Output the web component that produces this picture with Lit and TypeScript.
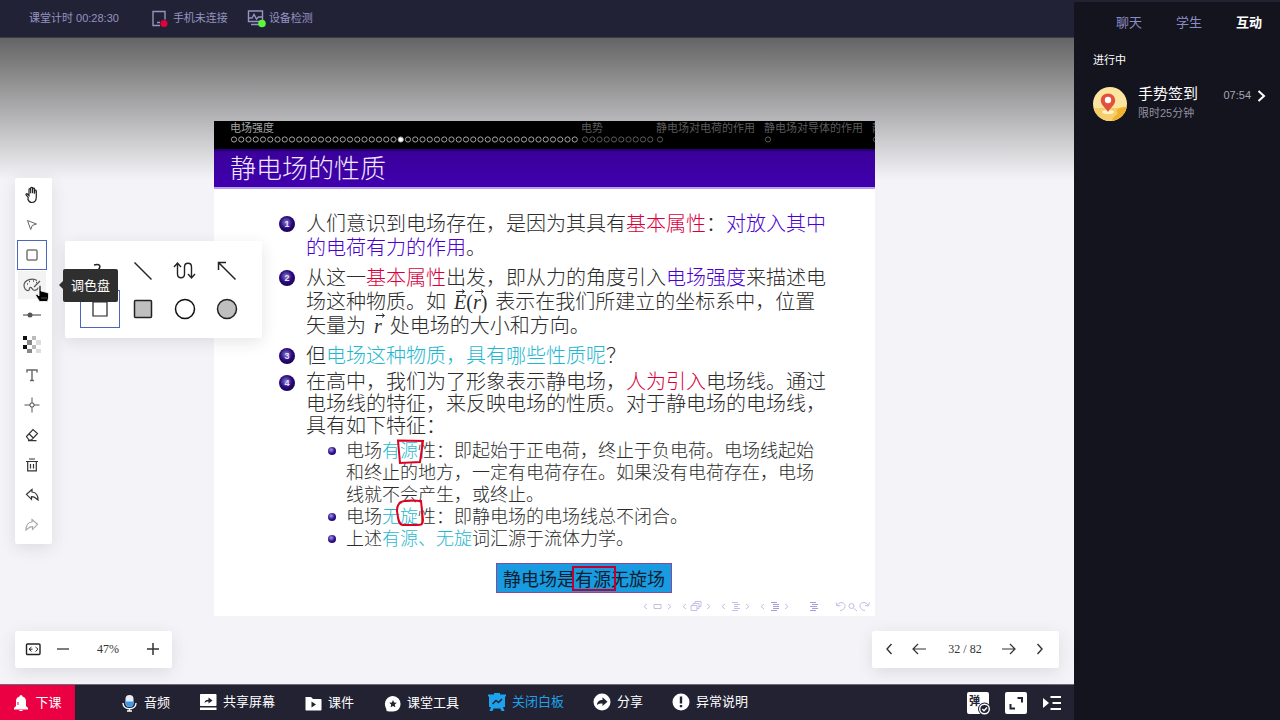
import { LitElement, html, css, svg, nothing } from "lit";
import { customElement, state } from "lit/decorators.js";

const box = (size: number, body: unknown) => html`<svg width=${size} height=${size} viewBox="0 0 ${size} ${size}" fill="none" stroke="currentColor" aria-hidden="true">${body}</svg>`;

const tools = [
  { name: "移动", icon: box(20, svg`<path d="M5.8 12.2 3.7 9.8c-.6-.9.5-1.7 1.3-1l1.6 1.5V4.4c0-1.2 1.6-1.2 1.7 0V8 3.1c.1-1.2 1.8-1.2 1.9 0V8l.1-4.3c.1-1.1 1.7-1.1 1.8 0v4.8l.2-3c.2-1 1.6-.9 1.6.2v5.8c0 3.5-1.6 5.8-4.5 5.8-2.300 0-3.300-1.500-3.900-3.200z" transform="translate(.4 .2)" stroke="#222" stroke-width="1.200"/>`) },
  { name: "选择", icon: box(20, svg`<path d="M5.500 5.500 14.500 9 10.300 10.400 8.700 14.500z" stroke="#666"/>`) },
  { name: "矩形", icon: box(20, svg`<rect x="5" y="5" width="10" height="10" rx=".5"/>`) },
  { name: "调色盘", icon: box(20, svg`<path d="M15 5.500C11 2.500 2.500 4.500 2 10c-.2 3 2 6 4.500 5.500 1.500-.5 0-2 1.500-3 1.500-.8 2 1.500 3.500 2.500 2 1 4-.5 5-2.500M18 6l-6 6" stroke="#555" stroke-width="1.200"/><path d="M5 9h1M7 6.500h1M11 6h1M14 7.500h1" stroke="#555" stroke-width="1.500"/>`) },
  { name: "线宽", icon: box(20, svg`<path d="M1 10h18" stroke="#666" stroke-width="1.300"/><circle cx="8" cy="10" r="2.500" fill="#555" stroke="none"/>`) },
  { name: "透明度", icon: box(20, svg`<g stroke="none"><path fill="#111" d="M1 1h4v4H1zM1 10h4v4H1z"/><path fill="#888" d="M5 5h5v5H5zM5 14h5v4H5z"/><path fill="#bbb" d="M10 1h4v4h-4zM10 10h4v4h-4z"/><path fill="#ddd" d="M14 5h5v5h-5zM14 14h5v4h-5z"/></g>`) },
  { name: "文本", icon: box(20, svg`<path d="M5 7.500V5h10v2.500M10 5v10.500M8 15.500h4" stroke="#666" stroke-width="1.400"/>`) },
  { name: "激光笔", icon: box(20, svg`<circle cx="10" cy="10" r="2.200"/><path d="M10 2.500v5M10 12.500v5M2.500 10h5M12.500 10h5" stroke="#555"/>`) },
  { name: "橡皮", icon: box(20, svg`<path d="m4.500 11.500 6.500-7 4.500 4-6 6.500H7zM7 8.800l4.300 4.200M6 15.700h8.500" stroke-width="1.200"/>`) },
  { name: "清空", icon: box(20, svg`<path d="M4 6.500h12M7 4h6M5.700 6.500v9.300h8.600V6.500M8.500 9v4.500M11.500 9v4.500" stroke-width="1.200"/>`) },
  { name: "撤销", icon: box(20, svg`<path d="M10 4.500 4.500 9.300l5 5v-2.600c3-.2 4 1.300 6.500 3.300 0-4.500-2-7.700-6-8z" stroke-width="1.200"/>`) },
  { name: "重做", icon: box(20, svg`<path d="M10 4.500 15.500 9.300l-5 5v-2.600c-3-.2-4 1.300-6.500 3.300 0-4.500 2-7.700 6-8z" stroke="#aaa" stroke-width="1.200"/>`) },
];

const shapes = [
  { name: "曲线", icon: box(26, svg`<path d="M6 7c8-2 7 3 2 7s3 6 11 5" stroke="#222" stroke-width="1.500"/>`) },
  { name: "直线", icon: box(26, svg`<path d="m4.500 4.500 17 17" stroke="#222" stroke-width="1.500"/>`) },
  { name: "折返线", icon: box(26, svg`<path d="m2 9 3.500-4L9 9M5.500 5v11c0 5 7 5 7 0V9c0-5 7-5 7 0v10M16 16l3.500 4 3.500-4" stroke="#222" stroke-width="1.400"/>`) },
  { name: "箭头", icon: box(26, svg`<path d="m21.500 21.500-17-17M4.500 12V4.500H12" stroke="#222" stroke-width="1.500"/>`) },
  { name: "矩形", icon: box(26, svg`<path d="M6 6h14v14H6z" stroke="#222" stroke-width="1.200"/>`) },
  { name: "实心矩形", icon: box(26, svg`<rect x="4.500" y="4.500" width="17" height="17" rx="1" fill="#bfbfbf" stroke="#222" stroke-width="1.500"/>`) },
  { name: "圆形", icon: box(26, svg`<circle cx="13" cy="13" r="9.500" stroke="#111" stroke-width="1.500"/>`) },
  { name: "实心圆形", icon: box(26, svg`<circle cx="13" cy="13" r="9.500" fill="#bfbfbf" stroke="#222" stroke-width="1.500"/>`) },
];

const actions = [
  { name: "音频", low: true, icon: box(18, svg`<rect x="5.500" y="1" width="8" height="12" rx="4" fill="#e8ecfa" stroke="none"/><path d="M5.500 7.500h8V9a4 4 0 0 1-8 0z" fill="#3b9be8" stroke="none"/><path d="M3 9c0 3.800 3 5.800 6.500 5.800S16 12.800 16 9M9.500 15v2M7 17h5" stroke-width="1.400"/>`) },
  { name: "共享屏幕", icon: box(18, svg`<path fill="currentColor" stroke="none" d="M2 1h14.500v0c.6 0 1 .4 1 1v10c0 .6-.4 1-1 1H2c-.6 0-1-.4-1-1V2c0-.6.4-1 1-1zM1 14.500h16.500V17H1z"/><path d="M5.500 10c.3-2 1.500-3.200 4-3.200V4.500L13.500 7.500 9.500 10.500V8.500c-1.500 0-2.500.3-4 1.500z" fill="#222233" stroke="none"/>`) },
  { name: "课件", low: true, icon: box(18, svg`<path fill="currentColor" stroke="none" d="M2 3h5l2 2h7.500c.6 0 1 .4 1 1v9.500c0 .6-.4 1-1 1H2.500c-.6 0-1-.4-1-1V3z"/><path d="m7.500 7.500 4.500 3-4.500 3z" fill="#222233" stroke="none"/>`) },
  { name: "课堂工具", low: true, icon: box(18, svg`<path fill="currentColor" stroke="none" d="M10 2a7.700 7.700 0 0 1 7.500 8c0 4.500-3 7.500-7.500 7.500-2 0-5.500 0-6.500-.5.300-1-.5-2.500-1-4A8 8 0 0 1 10 2z"/><path d="m10 6 1.100 2.500 2.700.3-2 1.800.6 2.700L10 11.900l-2.400 1.400.6-2.700-2-1.800 2.700-.3z" fill="#222233" stroke="none"/>`) },
  { name: "关闭白板", on: true, icon: box(18, svg`<path fill="currentColor" stroke="none" d="M6 0h6v1.500h6v2h-1V14h-2l1.500 4h-3L12.300 15.500H5.700L4.500 18h-3L3 14H1V3.500H0v-2h6z"/><path d="m4.500 11 3.500-3.500 2.500 2L14 6" stroke="#222233" stroke-width="1.500"/>`) },
  { name: "分享", icon: box(18, svg`<circle cx="9" cy="9" r="8.500" fill="currentColor" stroke="none"/><path d="M4 12c.3-3.500 2-5 5.500-5V4.200L14.500 8.700l-5 4.300v-2.600c-2.500 0-4 .3-5.500 1.600z" fill="#222233" stroke="none"/>`) },
  { name: "异常说明", icon: box(18, svg`<circle cx="9" cy="9" r="8.500" fill="currentColor" stroke="none"/><path d="M9 3.500v7M9 12v2.300" stroke="#222233" stroke-width="2.400"/>`) },
];

const sections = [
  { name: "电场强度", pages: 48, current: 23 },
  { name: "电势", pages: 10 },
  { name: "静电场对电荷的作用", pages: 1 },
  { name: "静电场对导体的作用", pages: 1 },
  { name: "静", pages: 1 },
];

const vec = (letter: string) => html`<i class="vec">${letter}<svg width="10" height="5" viewBox="0 0 10 5" fill="none" stroke="currentColor"><path d="M0 2.500h8M6 .5l2.500 2L6 4.500"/></svg></i>`;

@customElement("lecture-slide")
class LectureSlide extends LitElement {
  static styles = css`
    :host { display: block; background: #fff; color: #2c2c2c; font: 300 20px/24px "Noto Sans CJK SC", sans-serif; white-space: nowrap; }
    .outline { display: grid; grid-template-columns: 351px 75px 108px 108px minmax(0, 1fr); padding-left: 16px; height: 28px; background: #000; color: #5c5c5c; font-size: 11px; font-weight: 400; line-height: 13px; overflow-x: clip; }
    .outline .here { color: #a4a4a4; }
    .dots { display: block; overflow: visible; }
    h1 { margin: 0; padding: 0 16px 2px; background: linear-gradient(#1c0060, #3a009a 3px, #4000ae); border-bottom: 2px solid #b9a0ee; color: #efe8ff; font-size: 26px; font-weight: 300; line-height: 36px; }
    ol, ul { list-style: none; margin: 0; padding: 0; }
    ol { padding: 22px 40px 0 65px; }
    ol > li { display: grid; grid-template-columns: 16px 1fr; column-gap: 11px; margin-bottom: 6px; }
    ol > li.tight { margin-bottom: 3px; }
    ol > li.dense { line-height: 22px; margin-bottom: 15px; }
    .ball { width: 16px; height: 16px; margin-top: 5px; border-radius: 50%; background: radial-gradient(circle at 45% 40%, #8a80c8, #2a0a80 45%, #12003c 85%); color: #e6e2fa; font: bold 9px/16px "Liberation Sans", sans-serif; text-align: center; }
    ul { margin: 2px 0 0 22px; font-size: 18px; line-height: 22px; }
    ul li { display: grid; grid-template-columns: 8px 1fr; column-gap: 10px; }
    .bead { width: 8px; height: 8px; margin-top: 9px; border-radius: 50%; background: radial-gradient(circle at 40% 35%, #a09ad8, #2e1090 50%, #1a0050); }
    .red { color: #d8003c; }
    .blue { color: #4a00d0; }
    .cyan { color: #1fb8d0; }
    .math { font: 20px/20px "Liberation Serif", serif; margin: 0 8px; }
    .vec { position: relative; }
    .vec svg { position: absolute; left: 2px; top: -2px; }
    .ring { position: relative; }
    .ring svg { position: absolute; left: -4px; top: 2px; fill: none; stroke: #e00022; stroke-width: 2; }
    .final { display: block; width: max-content; margin: 0 0 0 282px; padding: 0 6px; border: 1px solid #8a4a9c; background: #189be0; color: #102030; font-size: 18px; font-weight: 400; line-height: 28px; }
    .final .ring::after { content: ""; position: absolute; inset: 1px -5px 0 -3px; border: 2px solid #c40030; }
    .nav { display: block; margin: 4px 2px 0 auto; }
  `;
  render() {
    return html`
      <div class="outline">
        ${sections.map((s) => html`<div class=${s.current ? "here" : ""}>${s.name}
          <svg class="dots" width=${s.pages * 7.25} height="12" viewBox="0 0 ${s.pages * 7.25} 12" fill="none" stroke="currentColor">
            ${Array.from({ length: s.pages }, (_, i) => svg`<circle cx=${4 + i * 7.25} cy="5.500" r="2.600" fill=${i === s.current ? "#fff" : "none"}/>`)}
          </svg></div>`)}
      </div>
      <h1>静电场的性质</h1>
      <ol>
        <li><span class="ball">1</span><div>人们意识到电场存在，是因为其具有<span class="red">基本属性</span>：<span class="blue">对放入其中<br>的电荷有力的作用</span>。</div></li>
        <li><span class="ball">2</span><div>从这一<span class="red">基本属性</span>出发，即从力的角度引入<span class="blue">电场强度</span>来描述电<br>场这种物质。如<span class="math">${vec("E")}(${vec("r")})</span>表示在我们所建立的坐标系中，位置<br>矢量为<span class="math">${vec("r")}</span>处电场的大小和方向。</div></li>
        <li class="tight"><span class="ball">3</span><div>但<span class="cyan">电场这种物质，具有哪些性质呢</span>？</div></li>
        <li class="dense"><span class="ball">4</span><div>在高中，我们为了形象表示静电场，<span class="red">人为引入</span>电场线。通过<br>电场线的特征，来反映电场的性质。对于静电场的电场线，<br>具有如下特征：
          <ul>
            <li><span class="bead"></span><div>电场<span class="cyan">有<span class="ring">源<svg width="30" height="28" viewBox="0 0 30 28"><path d="M2 2.500 27 3 24 24 4 25z"/></svg></span></span>性：即起始于正电荷，终止于负电荷。电场线起始<br>和终止的地方，一定有电荷存在。如果没有电荷存在，电场<br>线就不会产生，或终止。</div></li>
            <li><span class="bead"></span><div>电场<span class="cyan">无<span class="ring">旋<svg width="30" height="28" viewBox="0 4 30 28" overflow="visible"><path d="M3 3C9-1 20 1 25 1l2 19c0 5-2 5-6 5H7c-5 0-5-8-6-14 0-5 1-8 5-9"/></svg></span></span>性：即静电场的电场线总不闭合。</div></li>
            <li><span class="bead"></span><div>上述<span class="cyan">有源、无旋</span>词汇源于流体力学。</div></li>
          </ul></div></li>
      </ol>
      <div class="final">静电场是<span class="ring">有源</span>无旋场</div>
      <svg class="nav" width="230" height="19" viewBox="0 0 230 19" fill="none" stroke="#c6bce6">
        <path d="M4 7 1 9.500l3 2.500M25 7l3 2.500-3 2.500M43 7l-3 2.500 3 2.500M64 7l3 2.500-3 2.500M82 7l-3 2.500 3 2.500M103 7l3 2.500-3 2.500M121 7l-3 2.500 3 2.500M142 7l3 2.500-3 2.500"/>
        <path d="M11 7.500h7v4h-7zM48 8.500h6v5h-6zM50 8.500v-2h6v5h-2M52 6.500v-2h6v5h-2M89 5.500h6M91 7.500h6M91 9.500h4M91 11.500h6M89 13.500h6" />
        <path stroke="#a99cda" d="M128 5.500h6M130 7.500h6M130 9.500h6M130 11.500h6M128 13.500h6M167 5.500h6M169 7.500h6M167 9.500h7M169 11.500h6M167 13.500h6"/>
        <path d="M194 8.500c2-5 9-3 8 1-.5 2.500-2.500 4-5 4M193 5.500l1 3.500 3.500-.5M210.500 11l3.500 3M225 8.500c-2-5-9-3-8 1 .5 2.500 2.500 4 5 4M226.500 5.500l-1 3.500-3.500-.5"/><circle cx="208.500" cy="9" r="2.500"/>
      </svg>
    `;
  }
}

@customElement("app-root")
class AppRoot extends LitElement {
  @state() private tool = 2;
  @state() private shape = 4;
  @state() private tab = 2;

  static styles = css`
    :host { display: grid; grid-template-columns: minmax(0, 1fr) 206px; min-height: 100vh; background: #14141e; font: 13px/20px "Liberation Sans", "Noto Sans CJK SC", sans-serif; color: #fff; white-space: nowrap; }
    * { box-sizing: border-box; }
    svg { display: block; flex: none; }
    button { display: flex; align-items: center; justify-content: center; margin: 0; padding: 0; border: 0; background: none; color: inherit; font: inherit; cursor: pointer; }
    .room { display: flex; flex-direction: column; }
    .status { display: flex; align-items: center; height: 38px; padding: 0 29px 2px; border-bottom: 1px solid #3c3c48; background: #222236; color: #9494c0; font-size: 11px; }
    .status .link { display: flex; align-items: center; gap: 5px; margin-left: 19px; }
    .status .link svg { overflow: visible; }
    .status .first { margin-left: 32px; }
    .stage { position: relative; flex: 1; display: flex; justify-content: center; align-items: flex-start; padding: 83px 0 68px 15px; background: linear-gradient(#646464, #f4f4f8 142px); color: #333; }
    lecture-slide { flex: none; width: 661px; }
    .float { position: absolute; background: #fff; border-radius: 2px; box-shadow: 0 4px 16px rgba(40, 40, 60, 0.12); }
    .tools { left: 15px; top: 50%; transform: translateY(-50%); padding: 2px 5px 4px 2px; }
    .slot { position: relative; }
    .tools .tool { width: 30px; height: 30px; border: 1px solid transparent; }
    .tools .picked { border-color: #4c66c0; }
    .tools .hover { background: #f3f3f3; background-clip: padding-box; }
    .shapes { left: 48px; top: 1px; display: grid; grid-template-columns: repeat(4, 42px); grid-auto-rows: 38px; padding: 11px 14px 10px 15px; }
    .shapes .shape { border: 1px solid transparent; }
    .shapes .picked { border-color: #4c66c0; margin-right: 2px; }
    .tip { position: absolute; z-index: 1; left: 46px; top: -1px; padding: 0 8px; border-radius: 2px; background: #2f2f2f; color: #fff; line-height: 33px; }
    .tip::before { content: ""; position: absolute; left: -4px; top: 12px; border: solid transparent; border-width: 4px 4px 4px 0; border-right-color: #2f2f2f; }
    .pointer { position: absolute; z-index: 2; left: 17px; top: 15px; }
    .bar { bottom: 16px; display: flex; align-items: center; height: 37px; padding-bottom: 2px; font: 12px/18px "Liberation Serif", serif; }
    .bar button { height: 34px; }
    .zoom { left: 15px; padding-left: 9px; }
    .zoom output { width: 50px; text-align: center; }
    .zoom .fit { width: 18px; }
    .zoom .out { width: 41px; }
    .zoom .in { width: 39px; }
    .pager { right: 15px; padding-left: 5px; padding-right: 4px; }
    .pager output { width: 56px; text-align: center; }
    .pager .first { width: 24px; }
    .pager .prev { width: 36px; }
    .pager .next { width: 32px; }
    .pager .last { width: 30px; }
    .dock { display: flex; align-items: stretch; height: 37px; border-top: 1px solid #6c6c7a; background: #222233; }
    .leave { gap: 6px; width: 75px; padding-bottom: 1px; background: #ec0044; }
    .actions { display: flex; flex: 1; gap: 29px; padding-left: 45px; }
    .actions button { gap: 6px; padding-bottom: 3px; }
    .actions .low { padding-bottom: 0; }
    .actions .on { color: #1da2ee; }
    .extras { display: flex; align-items: center; gap: 14px; padding-right: 12px; }
    .side { padding: 2px 13px 0 19px; border-top: 2px solid #222233; }
    .tabs { display: flex; justify-content: flex-end; gap: 34px; padding: 9px 5px 0 0; color: #8c8cc4; }
    .tabs .open { color: #fff; font-weight: 700; }
    h2 { margin: 17px 0 16px; font-size: 11px; font-weight: 400; line-height: 20px; }
    .task { display: flex; width: 100%; justify-content: flex-start; align-items: flex-start; text-align: left; }
    .task .pin { margin-top: 1px; margin-right: 11px; }
    .task .what { flex: 1; font-size: 15px; line-height: 15px; }
    .task small { display: block; color: #9292a2; font-size: 11px; line-height: 24px; }
    .task time { color: #a6a6b4; font-size: 11px; line-height: 18px; margin-right: 6px; }
    .task .go { margin-top: 4px; }
  `;

  private shapePanel() {
    return html`<div class="float shapes">${shapes.map((s, i) => html`
      <button class="shape ${i === this.shape ? "picked" : ""}" aria-label=${s.name} @click=${() => (this.shape = i)}>${s.icon}</button>`)}</div>`;
  }

  private toolSlot(t: { name: string; icon: unknown }, i: number) {
    return html`<div class="slot">
      <button class="tool ${i === this.tool ? "picked" : ""} ${i === 3 ? "hover" : ""}" aria-label=${t.name} @click=${() => (this.tool = i)}>${t.icon}</button>
      ${i === 2 && this.tool === 2 ? this.shapePanel() : nothing}
      ${i === 3 ? html`<span class="tip" role="tooltip">${t.name}</span>
        <svg class="pointer" width="16" height="18" viewBox="0 0 16 18"><path d="M5 1.500c0-1.300 2-1.300 2 0V6l6 1.500c1 .3 1.500 1 1.500 2V13l-1 3.500h-8L2 11c-.8-1.300.8-2.300 1.800-1.200L5 11z" fill="#000" stroke="#fff" stroke-width=".8"/><path d="M8 12v2M10 12v2M12 12v2" stroke="#888" stroke-width=".6"/></svg>` : nothing}
    </div>`;
  }

  render() {
    return html`
      <main class="room" lang="zh-CN">
        <header class="status">
          <span>课堂计时 00:28:30</span>
          <span class="link first"><svg width="17" height="18" viewBox="0 0 17 18" fill="none" stroke="currentColor"><path d="M9 16.500H2V2.500h12v8M6 13.500h3" stroke-width="1.400"/><circle cx="13" cy="14.500" r="3.500" fill="#e4003c" stroke="none"/></svg>手机未连接</span>
          <span class="link"><svg width="17" height="18" viewBox="0 0 17 18" fill="none" stroke="currentColor"><path d="M1.500 2h14v10.500h-14zM2 9h3l2-3.500 2.500 4.500 2-2H15M4 15.500h9" stroke-width="1.400"/><circle cx="15" cy="14.500" r="3.800" fill="#5cf63c" stroke="none"/></svg>设备检测</span>
        </header>
        <section class="stage">
          <lecture-slide></lecture-slide>
          <div class="float tools" role="toolbar" aria-label="画板工具">${tools.map((t, i) => this.toolSlot(t, i))}</div>
          <div class="float bar zoom">
            <button class="fit" aria-label="适应宽度">${box(18, svg`<rect x="2.500" y="4" width="13.500" height="10.500" rx="1" stroke="#222" stroke-width="1.400"/><path d="M7.500 7 5 9.200 7.500 11.500M5 9.200h3.500M11.500 7 14 9.200l-2.500 2.300" stroke="#222"/>`)}</button>
            <button class="out" aria-label="缩小">${box(14, svg`<path d="M1 7h12" stroke="#444" stroke-width="1.400"/>`)}</button>
            <output>47%</output>
            <button class="in" aria-label="放大">${box(14, svg`<path d="M1 7h12M7 1v12" stroke="#333" stroke-width="1.500"/>`)}</button>
          </div>
          <div class="float bar pager">
            <button class="first" aria-label="首页">${box(14, svg`<path d="M9.500 2 5 7l4.500 5" stroke-width="1.400"/>`)}</button>
            <button class="prev" aria-label="上一页">${box(14, svg`<path d="M6 2 1 7l5 5M1 7h13" stroke-width="1.200"/>`)}</button>
            <output>32 / 82</output>
            <button class="next" aria-label="下一页">${box(14, svg`<path d="m8 2 5 5-5 5M13 7H0" stroke-width="1.200"/>`)}</button>
            <button class="last" aria-label="末页">${box(14, svg`<path d="M4.500 2 9 7l-4.500 5" stroke-width="1.400"/>`)}</button>
          </div>
        </section>
        <footer class="dock">
          <button class="leave">${box(16, svg`<path d="M8 0a1.500 1.500 0 0 1 1.500 1.500C12 2.200 13 4 13 6.500V11l2 2v1.500H1V13l2-2V6.500C3 4 4 2.200 6.500 1.500A1.500 1.500 0 0 1 8 0zM6 15h4c0 1.500-4 1.500-4 0z" fill="#fff" stroke="none"/><path d="M5 10V7" stroke="#ec0044"/>`)}下课</button>
          <nav class="actions">${actions.map((a) => html`<button class="${a.low ? "low" : ""} ${a.on ? "on" : ""}">${a.icon}<span>${a.name}</span></button>`)}</nav>
          <div class="extras">
            <button aria-label="弹幕"><svg width="24" height="24" viewBox="0 0 24 24"><rect x="1" y="1" width="22" height="22" rx="2" fill="#fff"/><text x="3" y="14" font-size="11" font-weight="700" fill="#222233">弹</text><circle cx="18.500" cy="18" r="6.500" fill="#222233"/><circle cx="18.500" cy="18" r="4.800" fill="none" stroke="#fff" stroke-width="1.400"/><path d="m16.300 18 1.700 1.700 3-3.200" fill="none" stroke="#fff" stroke-width="1.400"/></svg></button>
            <button aria-label="全屏"><svg width="24" height="24" viewBox="0 0 24 24"><rect x="1" y="1" width="22" height="22" rx="2" fill="#fff"/><path d="M13.500 7H18v4.500M6.500 13v4.500H11" fill="none" stroke="#222233" stroke-width="2"/></svg></button>
            <button aria-label="收起侧栏"><svg width="20" height="20" viewBox="0 0 20 20"><path d="m1 5 6 5-6 5z" fill="#fff"/><path d="M8.500 4H19M10.500 10H19M8.500 16H19" stroke="#fff" stroke-width="2"/></svg></button>
          </div>
        </footer>
      </main>
      <aside class="side" lang="zh-CN">
        <nav class="tabs">${["聊天", "学生", "互动"].map((n, i) => html`<button class=${i === this.tab ? "open" : ""} @click=${() => (this.tab = i)}>${n}</button>`)}</nav>
        <h2>进行中</h2>
        <button class="task">
          <svg class="pin" width="34" height="34" viewBox="0 0 34 34"><clipPath id="c"><circle cx="17" cy="17" r="17"/></clipPath><g clip-path="url(#c)"><path fill="#fbe5a0" d="M0 0h34v34H0z"/><path fill="#f6cf6c" d="M0 21h34v13H0z"/><path fill="#f0b32c" d="M34 20c-6 0-12 2-10 5s-4 3-5 9h15z"/><ellipse cx="15" cy="25" rx="6" ry="2" fill="#fff3cc"/><path fill="#e2513c" d="M15 6.500c4.200 0 7.200 3 7.200 6.800 0 4.700-4.700 7.700-7.200 11.700-2.500-4-7.200-7-7.200-11.700 0-3.800 3-6.800 7.200-6.800z"/><circle cx="15" cy="13" r="3.200" fill="#fff"/></g></svg>
          <span class="what">手势签到<small>限时25分钟</small></span>
          <time>07:54</time>
          <svg class="go" width="10" height="12" viewBox="0 0 10 12" fill="none" stroke="#fff" stroke-width="2"><path d="m1.500 1 5.500 5-5.500 5"/></svg>
        </button>
      </aside>
    `;
  }
}
